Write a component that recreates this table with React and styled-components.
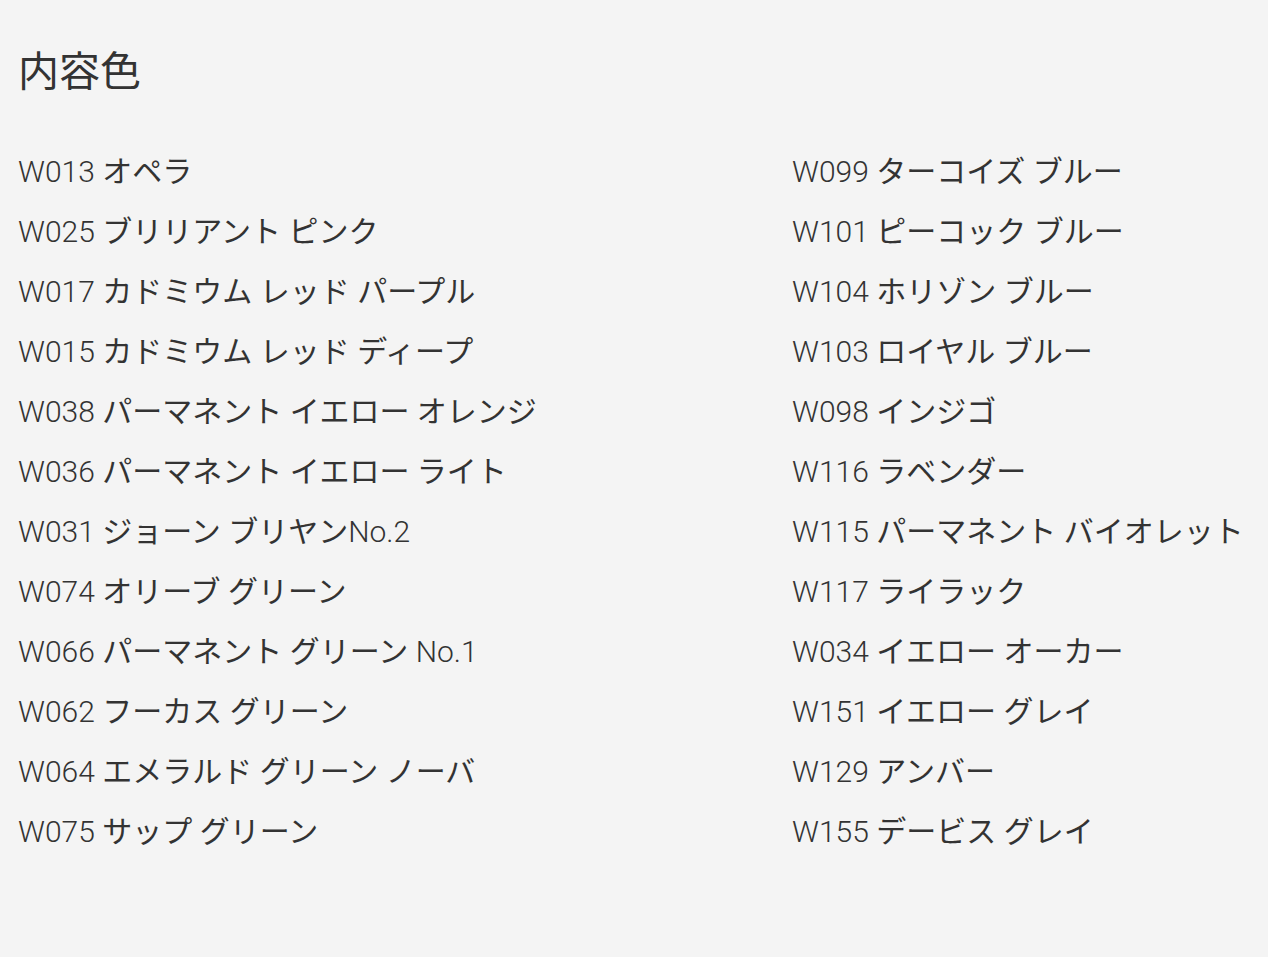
import React from 'react';
import styled, { createGlobalStyle } from 'styled-components';

const GlobalStyle = createGlobalStyle`
  body {
    margin: 0;
    background: #fff;
    font-family: Roboto, "Noto Sans CJK JP", sans-serif;
  }
`;

const Section = styled.section`
  background-color: #f4f4f4;
  padding: 42px 18px 95px;
  color: #333;
`;

const Title = styled.h2`
  margin: 0 0 40px;
  font-size: 41px;
  line-height: 60px;
  font-weight: 400;
`;

const Columns = styled.div`
  display: grid;
  grid-template-columns: 774px 1fr;
`;

const List = styled.ul`
  margin: 0;
  padding: 0;
  list-style: none;
`;

const Item = styled.li`
  font-size: 30px;
  font-weight: 400;
  line-height: 60px;
  white-space: nowrap;
`;

// latin runs (codes, "No.2") are set in the light face
const Latin = styled.span`
  font-weight: 300;
`;

const left = [
  'W013 オペラ',
  'W025 ブリリアント ピンク',
  'W017 カドミウム レッド パープル',
  'W015 カドミウム レッド ディープ',
  'W038 パーマネント イエロー オレンジ',
  'W036 パーマネント イエロー ライト',
  'W031 ジョーン ブリヤンNo.2',
  'W074 オリーブ グリーン',
  'W066 パーマネント グリーン No.1',
  'W062 フーカス グリーン',
  'W064 エメラルド グリーン ノーバ',
  'W075 サップ グリーン'
];

const right = [
  'W099 ターコイズ ブルー',
  'W101 ピーコック ブルー',
  'W104 ホリゾン ブルー',
  'W103 ロイヤル ブルー',
  'W098 インジゴ',
  'W116 ラベンダー',
  'W115 パーマネント バイオレット',
  'W117 ライラック',
  'W034 イエロー オーカー',
  'W151 イエロー グレイ',
  'W129 アンバー',
  'W155 デービス グレイ'
];

function ColorName({ name }) {
  const parts = name.split(/([A-Za-z0-9.]+)/);
  return parts.map((part, i) =>
    /^[A-Za-z0-9.]+$/.test(part) ? <Latin key={i}>{part}</Latin> : part
  );
}

function ColorList({ items }) {
  return (
    <List>
      {items.map((name) => (
        <Item key={name}>
          <ColorName name={name} />
        </Item>
      ))}
    </List>
  );
}

function App() {
  return (
    <>
      <GlobalStyle />
      <Section>
        <Title>内容色</Title>
        <Columns>
          <ColorList items={left} />
          <ColorList items={right} />
        </Columns>
      </Section>
    </>
  );
}

export default App;
